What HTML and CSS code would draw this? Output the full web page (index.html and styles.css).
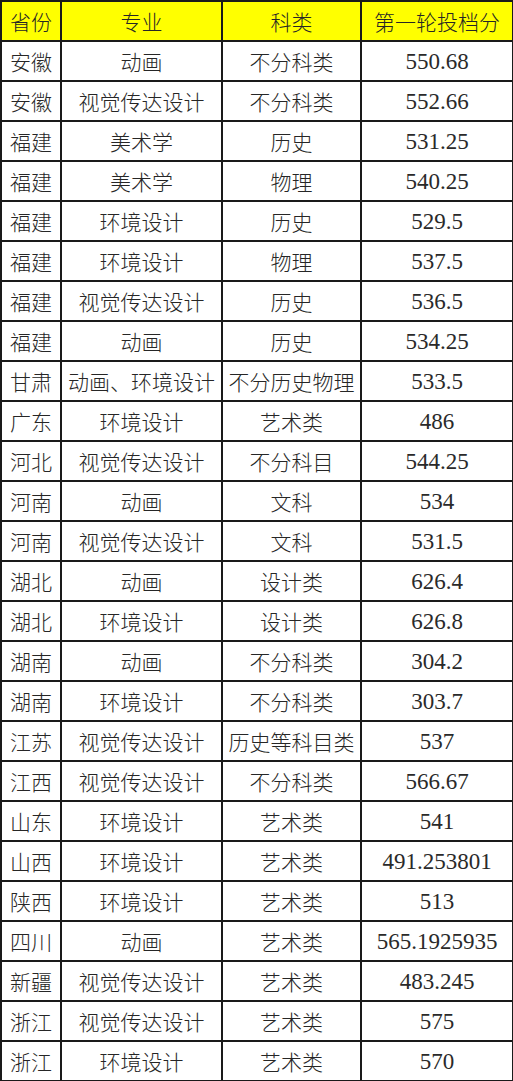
FILE: index.html
```html
<!DOCTYPE html>
<html>
<head>
<meta charset="utf-8">
<link rel="stylesheet" href="styles.css">
</head>
<body>
<table class="t">
<colgroup><col class="c1"><col class="c2"><col class="c3"><col class="c4"></colgroup>
<thead>
<tr class="hd"><th>省份</th><th>专业</th><th>科类</th><th>第一轮投档分</th></tr>
</thead>
<tbody>
<tr><td>安徽</td><td>动画</td><td>不分科类</td><td class="n">550.68</td></tr>
<tr><td>安徽</td><td>视觉传达设计</td><td>不分科类</td><td class="n">552.66</td></tr>
<tr><td>福建</td><td>美术学</td><td>历史</td><td class="n">531.25</td></tr>
<tr><td>福建</td><td>美术学</td><td>物理</td><td class="n">540.25</td></tr>
<tr><td>福建</td><td>环境设计</td><td>历史</td><td class="n">529.5</td></tr>
<tr><td>福建</td><td>环境设计</td><td>物理</td><td class="n">537.5</td></tr>
<tr><td>福建</td><td>视觉传达设计</td><td>历史</td><td class="n">536.5</td></tr>
<tr><td>福建</td><td>动画</td><td>历史</td><td class="n">534.25</td></tr>
<tr><td>甘肃</td><td>动画、环境设计</td><td>不分历史物理</td><td class="n">533.5</td></tr>
<tr><td>广东</td><td>环境设计</td><td>艺术类</td><td class="n">486</td></tr>
<tr><td>河北</td><td>视觉传达设计</td><td>不分科目</td><td class="n">544.25</td></tr>
<tr><td>河南</td><td>动画</td><td>文科</td><td class="n">534</td></tr>
<tr><td>河南</td><td>视觉传达设计</td><td>文科</td><td class="n">531.5</td></tr>
<tr><td>湖北</td><td>动画</td><td>设计类</td><td class="n">626.4</td></tr>
<tr><td>湖北</td><td>环境设计</td><td>设计类</td><td class="n">626.8</td></tr>
<tr><td>湖南</td><td>动画</td><td>不分科类</td><td class="n">304.2</td></tr>
<tr><td>湖南</td><td>环境设计</td><td>不分科类</td><td class="n">303.7</td></tr>
<tr><td>江苏</td><td>视觉传达设计</td><td>历史等科目类</td><td class="n">537</td></tr>
<tr><td>江西</td><td>视觉传达设计</td><td>不分科类</td><td class="n">566.67</td></tr>
<tr><td>山东</td><td>环境设计</td><td>艺术类</td><td class="n">541</td></tr>
<tr><td>山西</td><td>环境设计</td><td>艺术类</td><td class="n">491.253801</td></tr>
<tr><td>陕西</td><td>环境设计</td><td>艺术类</td><td class="n">513</td></tr>
<tr><td>四川</td><td>动画</td><td>艺术类</td><td class="n">565.1925935</td></tr>
<tr><td>新疆</td><td>视觉传达设计</td><td>艺术类</td><td class="n">483.245</td></tr>
<tr><td>浙江</td><td>视觉传达设计</td><td>艺术类</td><td class="n">575</td></tr>
<tr><td>浙江</td><td>环境设计</td><td>艺术类</td><td class="n">570</td></tr>
</tbody>
</table>
</body>
</html>
```
FILE: styles.css
```css
html, body {
  margin: 0;
  padding: 0;
  background: #ffffff;
}
.t {
  border-collapse: collapse;
  table-layout: fixed;
  width: 512px;
  margin: 0;
  font-family: "Noto Sans CJK SC", sans-serif;
  font-size: 21px;
  font-weight: 300;
  color: #262626;
}
.c1 { width: 60px; }
.c2 { width: 161px; }
.c3 { width: 139px; }
.c4 { width: 152px; }
.t th, .t td {
  border: 2px solid #1a1a1a;
  height: 40px;
  padding: 0;
  text-align: center;
  vertical-align: middle;
  font-weight: 300;
  white-space: nowrap;
  overflow: hidden;
  line-height: 1;
  box-sizing: border-box;
}
.hd th {
  background: #ffff00;
}
.t td.n {
  font-family: serif;
  font-weight: 400;
  font-size: 23px;
  letter-spacing: 0;
  color: #2a2a2a;
}
```
